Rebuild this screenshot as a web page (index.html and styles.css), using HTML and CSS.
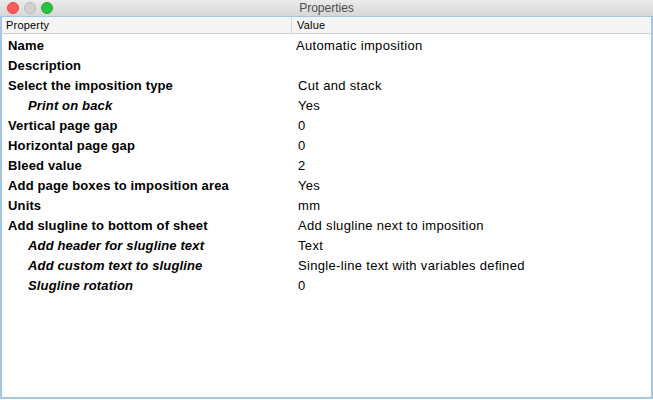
FILE: index.html
```html
<!DOCTYPE html>
<html>
<head>
<meta charset="utf-8">
<link rel="stylesheet" href="styles.css">
</head>
<body>
<div class="window">
  <div class="titlebar">
    <div class="lights">
      <span class="light red"></span>
      <span class="light gray"></span>
      <span class="light green"></span>
    </div>
    <div class="title">Properties</div>
  </div>
  <div class="content">
    <div class="header">
      <div class="hcell hprop">Property</div>
      <div class="hcell hval">Value</div>
    </div>
    <div class="rows">
      <div class="row"><div class="prop">Name</div><div class="val first">Automatic imposition</div></div>
      <div class="row"><div class="prop">Description</div><div class="val"></div></div>
      <div class="row"><div class="prop">Select the imposition type</div><div class="val">Cut and stack</div></div>
      <div class="row"><div class="prop sub">Print on back</div><div class="val">Yes</div></div>
      <div class="row"><div class="prop">Vertical page gap</div><div class="val">0</div></div>
      <div class="row"><div class="prop">Horizontal page gap</div><div class="val">0</div></div>
      <div class="row"><div class="prop">Bleed value</div><div class="val">2</div></div>
      <div class="row"><div class="prop">Add page boxes to imposition area</div><div class="val">Yes</div></div>
      <div class="row"><div class="prop">Units</div><div class="val">mm</div></div>
      <div class="row"><div class="prop">Add slugline to bottom of sheet</div><div class="val">Add slugline next to imposition</div></div>
      <div class="row"><div class="prop sub">Add header for slugline text</div><div class="val">Text</div></div>
      <div class="row"><div class="prop sub">Add custom text to slugline</div><div class="val">Single-line text with variables defined</div></div>
      <div class="row"><div class="prop sub">Slugline rotation</div><div class="val">0</div></div>
    </div>
  </div>
</div>
</body>
</html>
```
FILE: styles.css
```css
html, body {
  margin: 0;
  padding: 0;
  background: #ffffff;
}
body {
  font-family: "Liberation Sans", Arial, sans-serif;
  color: #000;
  width: 653px;
  height: 400px;
  overflow: hidden;
}
.window {
  width: 653px;
  height: 400px;
  display: flex;
  flex-direction: column;
  box-sizing: border-box;
}
.titlebar {
  height: 16px;
  flex: none;
  background: linear-gradient(#ebebeb, #d6d6d6);
  display: flex;
  align-items: center;
  justify-content: center;
  position: relative;
}
.lights {
  position: absolute;
  left: 7px;
  top: 2px;
  display: flex;
  gap: 5px;
}
.light {
  width: 12px;
  height: 12px;
  border-radius: 50%;
  box-sizing: border-box;
}
.red { background: #fc5f57; border: 1px solid #e0443e; }
.gray { background: #d0d0d0; border: 1px solid #bdbdbd; }
.green { background: #29c240; border: 1px solid #1aab29; }
.title {
  font-size: 12px;
  color: #4d4d4d;
  line-height: 16px;
}
.content {
  flex: 1;
  border: 2px solid #a6c7e2;
  border-top: 1px solid #a6c7e2;
  margin-bottom: 1px;
  background: #fff;
  display: flex;
  flex-direction: column;
}
.header {
  display: flex;
  height: 16px;
  background: #f5f5f5;
  border-bottom: 1px solid #cfcfcf;
  font-size: 11px;
  letter-spacing: 0.2px;
  line-height: 16px;
}
.hcell {
  box-sizing: border-box;
}
.hprop {
  width: 290px;
  padding-left: 4px;
  border-right: 1px solid #d8d8d8;
}
.hval {
  padding-left: 5px;
}
.rows {
  display: flex;
  flex-direction: column;
  padding-top: 1px;
}
.row {
  display: flex;
  height: 20px;
  align-items: center;
  font-size: 13px;
}
.prop {
  width: 290px;
  padding-left: 6px;
  box-sizing: border-box;
  font-weight: bold;
  letter-spacing: 0.15px;
}
.prop.sub {
  padding-left: 26px;
  font-style: italic;
}
.val {
  padding-left: 6px;
  letter-spacing: 0.33px;
}
.val.first {
  padding-left: 4px;
}
```
